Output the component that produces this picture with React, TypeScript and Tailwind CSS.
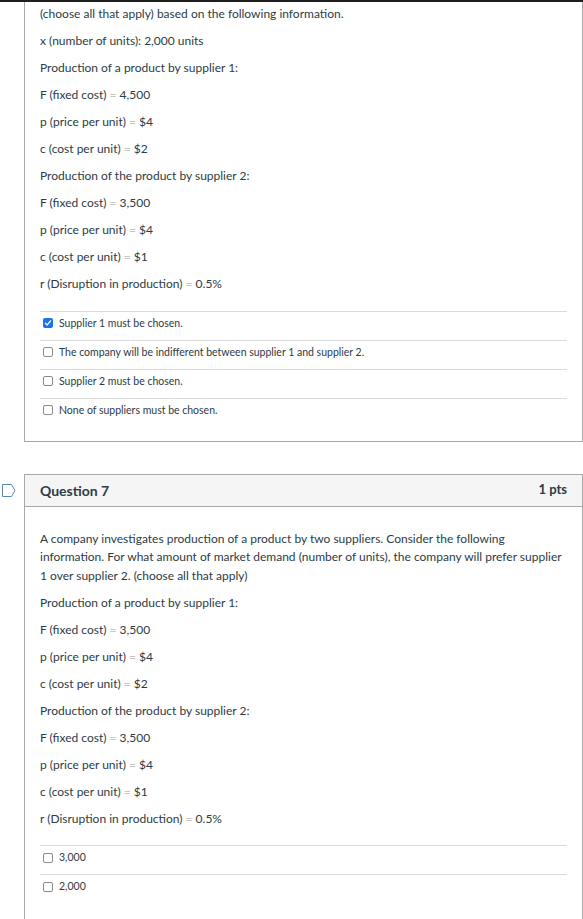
import React from 'react';

const FONT = { fontFamily: 'Lato, "Noto Sans", sans-serif' };

type Line = [string, string?];

const Q6_LINES: Line[] = [
  ['(choose all that apply) based on the following information.'],
  ['x (number of units): 2,000 units'],
  ['Production of a product by supplier 1:'],
  ['F (fixed cost)', '4,500'],
  ['p (price per unit)', '$4'],
  ['c (cost per unit)', '$2'],
  ['Production of the product by supplier 2:'],
  ['F (fixed cost)', '3,500'],
  ['p (price per unit)', '$4'],
  ['c (cost per unit)', '$1'],
  ['r (Disruption in production)', '0.5%'],
];

const Q7_LINES: Line[] = [
  ['Production of a product by supplier 1:'],
  ['F (fixed cost)', '3,500'],
  ['p (price per unit)', '$4'],
  ['c (cost per unit)', '$2'],
  ['Production of the product by supplier 2:'],
  ['F (fixed cost)', '3,500'],
  ['p (price per unit)', '$4'],
  ['c (cost per unit)', '$1'],
  ['r (Disruption in production)', '0.5%'],
];

function TextLine({ line }: { line: Line }) {
  const [label, value] = line;
  return (
    <p className="text-[12px] leading-[18.5px] mb-[8.5px] text-[#2d3b45]">
      {value === undefined ? (
        label
      ) : (
        <>
          {label} <span className="text-[#c4c4c4]">=</span> {value}
        </>
      )}
    </p>
  );
}

function Checkbox({ checked }: { checked?: boolean }) {
  if (checked) {
    return (
      <span className="w-[10px] h-[10px] rounded-[2px] bg-[#1a73e8] flex items-center justify-center shrink-0">
        <svg width="8" height="8" viewBox="0 0 8 8" fill="none">
          <path d="M1.4 4.2 L3.2 5.9 L6.6 1.9" stroke="white" strokeWidth="1.4" strokeLinecap="round" strokeLinejoin="round" />
        </svg>
      </span>
    );
  }
  return <span className="w-[10px] h-[10px] rounded-[2px] border border-[#8a8a8a] bg-white shrink-0" />;
}

function Answer({ text, checked }: { text: string; checked?: boolean }) {
  return (
    <div className="border-t border-[#dadada] pt-[4px] pb-[9px] pl-[3px] flex items-center gap-[6px]">
      <Checkbox checked={checked} />
      <span className="text-[10.5px] leading-[15px] text-[#2d3b45]">{text}</span>
    </div>
  );
}

function FlagIcon() {
  return (
    <svg width="14" height="13" viewBox="0 0 14 13" fill="none">
      <path d="M0.5 0.5 H9.5 L13 6.5 L9.5 12.5 H0.5 Z" stroke="#5b86b8" strokeWidth="1" strokeLinejoin="round" />
    </svg>
  );
}

export default function App() {
  return (
    <div className="w-[583px] h-[919px] overflow-hidden bg-white relative" style={FONT}>
      <div className="h-[2px] bg-[#1f1f1f]" />

      {/* Question 6 (scrolled, top cut off) */}
      <div className="ml-[24px] w-[559px] border-x border-b border-[#a9a9a9] px-[15px] pt-[3px] pb-[14px]">
        {Q6_LINES.map((l, i) => (
          <TextLine key={i} line={l} />
        ))}
        <div className="mt-[17px]">
          <Answer text="Supplier 1 must be chosen." checked />
          <Answer text="The company will be indifferent between supplier 1 and supplier 2." />
          <Answer text="Supplier 2 must be chosen." />
          <Answer text="None of suppliers must be chosen." />
        </div>
      </div>

      {/* Question 7 */}
      <div className="relative mt-[32px]">
        <div className="absolute left-[2px] top-[10px]">
          <FlagIcon />
        </div>
        <div className="ml-[24px] w-[559px] border border-[#a9a9a9]">
          <div className="h-[32px] bg-[#f5f5f5] border-b border-[#a9a9a9] px-[15px] flex items-center justify-between">
            <span className="text-[14px] font-bold text-[#2d3b45]">Question 7</span>
            <span className="text-[13px] font-bold text-[#2d3b45]">1 pts</span>
          </div>
          <div className="px-[15px] pt-[23px] pb-[40px]">
            <p className="text-[12px] leading-[18.5px] mb-[8.5px] text-[#2d3b45] pr-[2px]">
              A company investigates production of a product by two suppliers. Consider the following
              information. For what amount of market demand (number of units), the company will prefer supplier
              1 over supplier 2. (choose all that apply)
            </p>
            {Q7_LINES.map((l, i) => (
              <TextLine key={i} line={l} />
            ))}
            <div className="mt-[17px]">
              <Answer text="3,000" />
              <Answer text="2,000" />
            </div>
          </div>
        </div>
      </div>
    </div>
  );
}
